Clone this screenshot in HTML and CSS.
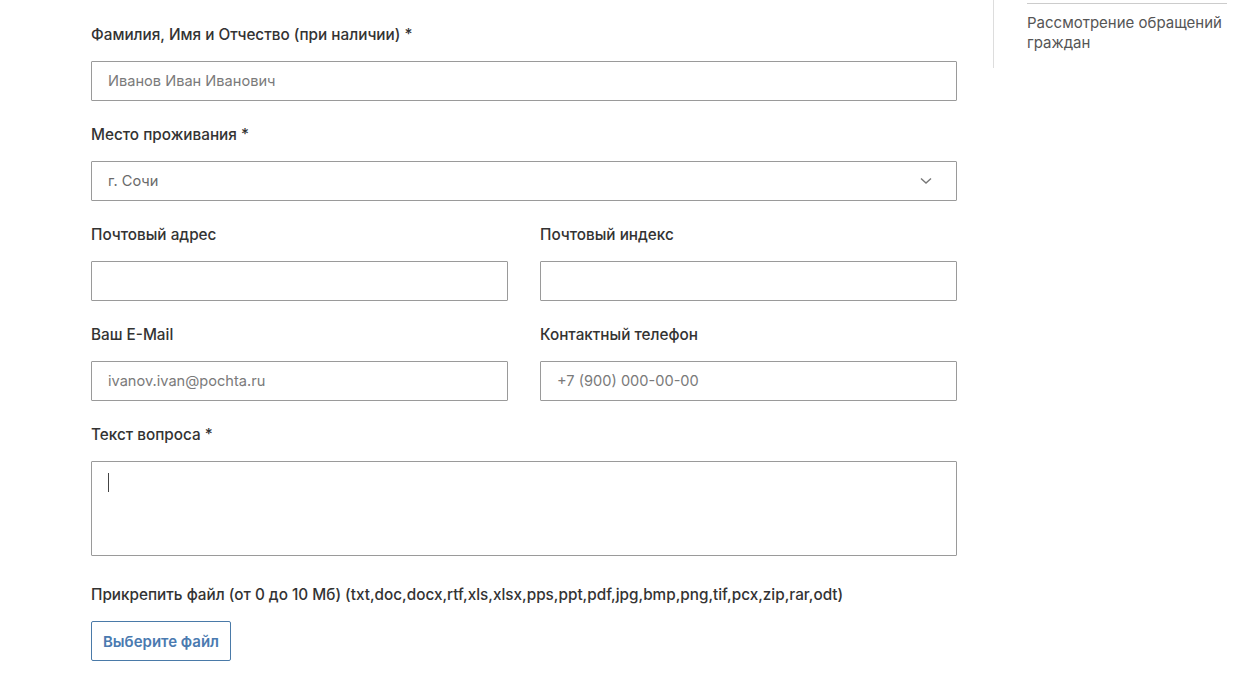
FILE: index.html
```html
<!DOCTYPE html>
<html lang="ru">
<head>
<meta charset="utf-8">
<link rel="stylesheet" href="styles.css">
</head>
<body>
<div class="page">
  <main class="form">
    <div class="field">
      <div class="label">Фамилия, Имя и Отчество (при наличии) *</div>
      <div class="box"><span class="ph">Иванов Иван Иванович</span></div>
    </div>
    <div class="field">
      <div class="label">Место проживания *</div>
      <div class="box select"><span class="val">г. Сочи</span>
        <svg class="chev" width="12" height="8" viewBox="0 0 12 8"><path d="M1 1.5 L6 6 L11 1.5" fill="none" stroke="#777" stroke-width="1.4"/></svg>
      </div>
    </div>
    <div class="row">
      <div class="field">
        <div class="label">Почтовый адрес</div>
        <div class="box"></div>
      </div>
      <div class="field">
        <div class="label">Почтовый индекс</div>
        <div class="box"></div>
      </div>
    </div>
    <div class="row">
      <div class="field">
        <div class="label">Ваш E-Mail</div>
        <div class="box"><span class="ph">ivanov.ivan@pochta.ru</span></div>
      </div>
      <div class="field">
        <div class="label">Контактный телефон</div>
        <div class="box"><span class="ph">+7 (900) 000-00-00</span></div>
      </div>
    </div>
    <div class="field">
      <div class="label">Текст вопроса *</div>
      <div class="box area"><span class="caret"></span></div>
    </div>
    <div class="attach">
      <div class="label">Прикрепить файл (от 0 до 10 Мб) (txt,doc,docx,rtf,xls,xlsx,pps,ppt,pdf,jpg,bmp,png,tif,pcx,zip,rar,odt)</div>
      <div class="btn">Выберите файл</div>
    </div>
  </main>
  <aside class="side">
    <div class="side-item">Рассмотрение обращений граждан</div>
  </aside>
</div>
</body>
</html>
```
FILE: styles.css
```css
* { box-sizing: border-box; }
body {
  margin: 0;
  background: #fff;
  font-family: "Inter", "Liberation Sans", sans-serif;
  color: #333;
}
.page {
  display: flex;
  align-items: flex-start;
  padding-left: 91px;
}
.form {
  width: 866px;
  padding-top: 25px;
}
.field { margin-bottom: 24px; }
.label {
  font-size: 15.3px;
  font-weight: 500;
  line-height: 20px;
  color: #333;
  margin-bottom: 16px;
  white-space: nowrap;
}
.box {
  height: 40px;
  border: 1px solid #9a9a9a;
  border-radius: 1px;
  display: flex;
  align-items: center;
  padding: 0 16px;
  font-size: 14.6px;
}
.ph { color: #7a7a7a; }
.val { color: #6a6a6a; }
.select { justify-content: space-between; padding-right: 24px; }
.chev { display: block; }
.row {
  display: grid;
  grid-template-columns: 1fr 1fr;
  column-gap: 32px;
}
.area {
  height: 95px;
  align-items: flex-start;
  padding-top: 11px;
}
.caret {
  width: 1px;
  height: 19px;
  background: #444;
}
.attach { padding-top: 5px; }
.attach .label { margin-bottom: 16px; }
.btn {
  width: 140px;
  height: 40px;
  border: 1px solid #4a7aa8;
  border-radius: 2px;
  color: #4a7ab0;
  font-size: 15px;
  font-weight: 600;
  display: flex;
  align-items: center;
  justify-content: center;
}
.side {
  margin-left: 36px;
  border-left: 1px solid #ddd;
  height: 68px;
  padding-left: 33px;
}
.side-item {
  width: 200px;
  margin-top: 3px;
  border-top: 1px solid #ccc;
  padding-top: 9px;
  font-size: 15px;
  line-height: 20px;
  color: #555;
}
```
